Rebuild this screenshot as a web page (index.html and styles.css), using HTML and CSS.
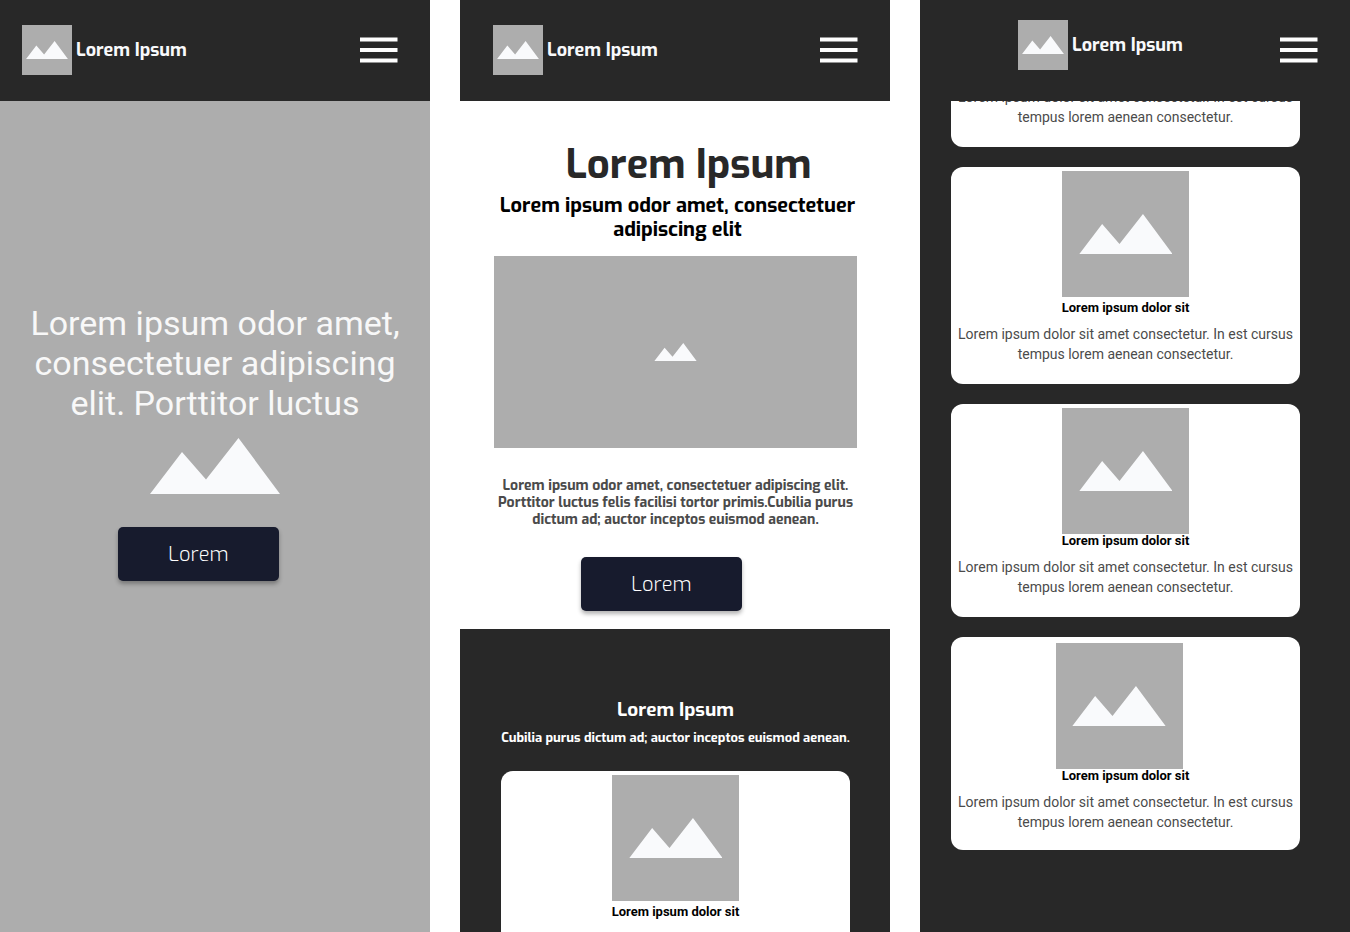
FILE: index.html
```html
<!DOCTYPE html>
<html lang="en">
<head>
<meta charset="utf-8">
<meta name="viewport" content="width=device-width, initial-scale=1">
<title>Lorem Ipsum</title>
<link rel="stylesheet" href="styles.css">
</head>
<body>
<svg class="defs" aria-hidden="true">
  <symbol id="peaks" viewBox="0 0 130 56"><path d="M0 56 32 14 56 41.500 88.500 0 130 56Z"/></symbol>
  <symbol id="bars" viewBox="0 0 38 26"><path d="M0 .5h37.500v4H0zM0 11h37.500v4H0zM0 21.500h37.500v4H0z"/></symbol>
</svg>
<div class="screens">
  <section class="screen screen-hero">
    <header class="topbar">
      <a class="brand" href="#"><span class="thumb thumb-logo"><svg class="peaks"><use href="#peaks"/></svg></span><span>Lorem Ipsum</span></a>
      <button class="menu" type="button" aria-label="Menu"><svg><use href="#bars"/></svg></button>
    </header>
    <div class="hero">
      <h1 class="hero-text">Lorem ipsum odor amet, consectetuer adipiscing elit. Porttitor luctus</h1>
      <svg class="peaks hero-peaks"><use href="#peaks"/></svg>
      <button class="cta" type="button">Lorem</button>
    </div>
  </section>

  <section class="screen screen-about">
    <header class="topbar topbar-inset">
      <a class="brand" href="#"><span class="thumb thumb-logo"><svg class="peaks"><use href="#peaks"/></svg></span><span>Lorem Ipsum</span></a>
      <button class="menu" type="button" aria-label="Menu"><svg><use href="#bars"/></svg></button>
    </header>
    <div class="about">
      <h1 class="title">Lorem Ipsum</h1>
      <h2 class="subtitle">Lorem ipsum odor amet, consectetuer adipiscing elit</h2>
      <div class="thumb thumb-wide"><svg class="peaks"><use href="#peaks"/></svg></div>
      <p class="copy">Lorem ipsum odor amet, consectetuer adipiscing elit. Porttitor luctus felis facilisi tortor primis.Cubilia purus dictum ad; auctor inceptos euismod aenean.</p>
      <button class="cta" type="button">Lorem</button>
    </div>
    <div class="services">
      <h2 class="services-title">Lorem Ipsum</h2>
      <p class="services-lead">Cubilia purus dictum ad; auctor inceptos euismod aenean.</p>
      <article class="card card-spaced">
        <div class="thumb thumb-card"><svg class="peaks"><use href="#peaks"/></svg></div>
        <h3>Lorem ipsum dolor sit</h3>
        <p>Lorem ipsum dolor sit amet consectetur. In est cursus tempus lorem aenean consectetur.</p>
      </article>
    </div>
  </section>

  <section class="screen screen-cards">
    <header class="topbar topbar-center">
      <a class="brand" href="#"><span class="thumb thumb-logo"><svg class="peaks"><use href="#peaks"/></svg></span><span>Lorem Ipsum</span></a>
      <button class="menu" type="button" aria-label="Menu"><svg><use href="#bars"/></svg></button>
    </header>
    <div class="card-list">
      <article class="card card-spaced">
        <p>Lorem ipsum dolor sit amet consectetur. In est cursus tempus lorem aenean consectetur.</p>
      </article>
      <article class="card card-spaced">
        <div class="thumb thumb-card"><svg class="peaks"><use href="#peaks"/></svg></div>
        <h3>Lorem ipsum dolor sit</h3>
        <p>Lorem ipsum dolor sit amet consectetur. In est cursus tempus lorem aenean consectetur.</p>
      </article>
      <article class="card">
        <div class="thumb thumb-card"><svg class="peaks"><use href="#peaks"/></svg></div>
        <h3>Lorem ipsum dolor sit</h3>
        <p>Lorem ipsum dolor sit amet consectetur. In est cursus tempus lorem aenean consectetur.</p>
      </article>
      <article class="card card-last">
        <div class="thumb thumb-card"><svg class="peaks"><use href="#peaks"/></svg></div>
        <h3>Lorem ipsum dolor sit</h3>
        <p>Lorem ipsum dolor sit amet consectetur. In est cursus tempus lorem aenean consectetur.</p>
      </article>
    </div>
  </section>
</div>
</body>
</html>
```
FILE: styles.css
```css
* { box-sizing: border-box; }

body {
  margin: 0;
  background: #fff;
  color: #000;
  font-family: Roboto, "Liberation Sans", sans-serif;
}

h1, h2, h3, p { margin: 0; text-align: center; }

button { border: 0; padding: 0; font: inherit; cursor: pointer; }

.defs { display: none; }

.screens {
  display: grid;
  grid-template-columns: repeat(3, minmax(0, 1fr));
  gap: 30px;
  height: 100vh;
}

.screen {
  display: flex;
  flex-direction: column;
  min-height: 0;
  overflow: hidden;
}

.screen-hero { background: #adadad; }
.screen-about { background: #fff; }
.screen-cards { background: #282828; }

/* Top bar */
.topbar {
  display: flex;
  flex: none;
  justify-content: space-between;
  align-items: center;
  height: 101px;
  padding: 0 32px 2px 22px;
  background: #282828;
}

.topbar-inset { padding-left: 33px; }
.topbar-center { padding-left: 98px; }
.topbar-center .brand { padding-bottom: 10px; }

.brand {
  display: flex;
  align-items: center;
  gap: 4px;
  color: #f8f9fb;
  font-family: Exo, "Exo 2", Roboto, sans-serif;
  font-size: 18px;
  font-weight: 700;
  line-height: 22px;
  text-decoration: none;
}

.menu { display: flex; background: none; }
.menu svg { width: 38px; height: 26px; fill: #fff; }

/* Picture placeholders */
.thumb {
  display: flex;
  flex: none;
  align-items: center;
  justify-content: center;
  background: #adadad;
}

.peaks { width: 74%; aspect-ratio: 130 / 56; fill: #f9fafc; }

.thumb-logo { width: 50px; height: 50px; padding-top: 1px; }
.thumb-logo .peaks { width: 42px; }
.thumb-wide { width: 100%; height: 192px; }
.thumb-wide .peaks { width: 43px; }
.thumb-card { width: 127px; height: 126px; }

/* Call to action */
.cta {
  width: 161px;
  height: 54px;
  border-radius: 5px;
  background: #171b2d;
  box-shadow: 0 3px 4px rgba(0, 0, 0, .3);
  color: #fff;
  font-family: Exo, "Exo 2", Roboto, sans-serif;
  font-size: 20px;
  font-weight: 300;
}

/* Hero */
.hero {
  display: flex;
  flex-direction: column;
  align-items: center;
  padding: 202px 24px 0;
}

.hero-text {
  color: #f8f8f8;
  font-size: 34px;
  font-weight: 400;
  line-height: 40px;
}

.hero-peaks { width: 130px; margin: 15px 0 33px; }
.hero .cta { margin-right: 33px; }

/* About */
.about {
  display: flex;
  flex: none;
  flex-direction: column;
  align-items: center;
  padding: 39px 33px 18px 34px;
  font-family: Exo, "Exo 2", Roboto, sans-serif;
}

.title {
  padding-left: 26px;
  color: #282828;
  font-size: 40px;
  font-weight: 700;
  line-height: 50px;
}

.subtitle {
  padding: 4px 0 14px 4px;
  font-size: 20px;
  font-weight: 700;
  line-height: 24px;
}

.copy {
  padding: 29px 0;
  color: #4b4b4b;
  font-size: 14px;
  font-weight: 700;
  line-height: 17px;
}

.about .cta { margin-right: 28px; }

/* Services */
.services {
  flex: 1;
  padding: 69px 40px 0 41px;
  background: #282828;
}

.services-title,
.services-lead {
  color: #fff;
  font-family: Exo, "Exo 2", Roboto, sans-serif;
  font-weight: 700;
}

.services-title { font-size: 19px; line-height: 24px; }
.services-lead {
  margin: 0 -8px;
  padding: 8px 0 25px;
  font-size: 13px;
  line-height: 16px;
}

/* Cards */
.card-list {
  display: flex;
  flex: 1;
  flex-direction: column;
  justify-content: flex-end;
  gap: 20px;
  min-height: 0;
  padding: 0 50px 82px 31px;
  overflow: hidden;
}

.card {
  display: flex;
  flex: none;
  flex-direction: column;
  align-items: center;
  padding: 4px 0 20px;
  border-radius: 12px;
  background: #fff;
}

.card h3 { font-size: 13px; font-weight: 700; line-height: 14px; }
.card p { padding-top: 9px; color: #4b4b4b; font-size: 14px; line-height: 20px; }
.card-spaced h3 { padding-top: 4px; }
.card-last { padding: 6px 0 18px; }
.card-last .thumb { margin-right: 13px; }
```
